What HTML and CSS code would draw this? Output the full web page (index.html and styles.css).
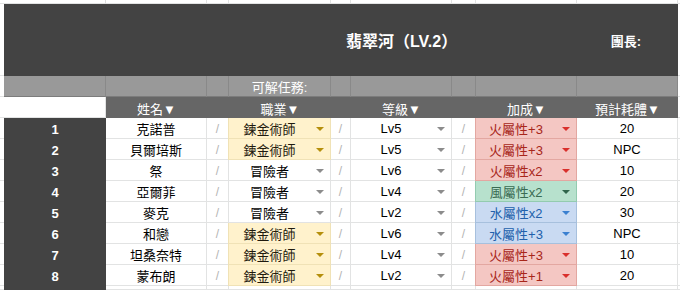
FILE: index.html
```html
<!DOCTYPE html>
<html lang="zh-Hant">
<head>
<meta charset="utf-8">
<title>翡翠河</title>
<link rel="stylesheet" href="styles.css">
</head>
<body>
<div class="sheet">
  <!-- top partial row -->
  <div class="c g"></div><div class="c top-a"></div><div class="c"></div><div class="c"></div><div class="c"></div><div class="c"></div><div class="c"></div><div class="c"></div><div class="c"></div><div class="c"></div><div class="c g"></div>

  <!-- title row -->
  <div class="c g"></div>
  <div class="title"><span class="title-name">翡翠河（LV.2）</span><span class="leader">團長:</span></div>
  <div class="c g"></div>

  <!-- grey row -->
  <div class="c g"></div>
  <div class="c gr"></div><div class="c gr"></div><div class="c gr"></div><div class="c gr">可解任務:</div><div class="c gr"></div><div class="c gr"></div><div class="c gr"></div><div class="c gr"></div><div class="c gr"></div>
  <div class="c g"></div>

  <!-- header row -->
  <div class="c g"></div>
  <div class="c"></div>
  <div class="c hd">姓名▼</div><div class="c hd"></div><div class="c hd">職業▼</div><div class="c hd"></div><div class="c hd">等級▼</div><div class="c hd"></div><div class="c hd">加成▼</div><div class="c hd">預計耗體▼</div>
  <div class="c g"></div>

  <!-- row 1 -->
  <div class="c g"></div>
  <div class="c num">1</div><div class="c">克諾普</div><div class="c sl">/</div>
  <div class="c dd y"><span class="t">鍊金術師</span><i class="a"></i></div><div class="c sl">/</div>
  <div class="c dd"><span class="t">Lv5</span><i class="a"></i></div><div class="c sl">/</div>
  <div class="c dd r"><span class="t">火屬性+3</span><i class="a"></i></div><div class="c">20</div>
  <div class="c g"></div>

  <!-- row 2 -->
  <div class="c g"></div>
  <div class="c num">2</div><div class="c">貝爾培斯</div><div class="c sl">/</div>
  <div class="c dd y"><span class="t">鍊金術師</span><i class="a"></i></div><div class="c sl">/</div>
  <div class="c dd"><span class="t">Lv5</span><i class="a"></i></div><div class="c sl">/</div>
  <div class="c dd r"><span class="t">火屬性+3</span><i class="a"></i></div><div class="c">NPC</div>
  <div class="c g"></div>

  <!-- row 3 -->
  <div class="c g"></div>
  <div class="c num">3</div><div class="c">祭</div><div class="c sl">/</div>
  <div class="c dd"><span class="t">冒險者</span><i class="a"></i></div><div class="c sl">/</div>
  <div class="c dd"><span class="t">Lv6</span><i class="a"></i></div><div class="c sl">/</div>
  <div class="c dd r"><span class="t">火屬性x2</span><i class="a"></i></div><div class="c">10</div>
  <div class="c g"></div>

  <!-- row 4 -->
  <div class="c g"></div>
  <div class="c num">4</div><div class="c">亞爾菲</div><div class="c sl">/</div>
  <div class="c dd"><span class="t">冒險者</span><i class="a"></i></div><div class="c sl">/</div>
  <div class="c dd"><span class="t">Lv4</span><i class="a"></i></div><div class="c sl">/</div>
  <div class="c dd gn"><span class="t">風屬性x2</span><i class="a"></i></div><div class="c">20</div>
  <div class="c g"></div>

  <!-- row 5 -->
  <div class="c g"></div>
  <div class="c num">5</div><div class="c">麥克</div><div class="c sl">/</div>
  <div class="c dd"><span class="t">冒險者</span><i class="a"></i></div><div class="c sl">/</div>
  <div class="c dd"><span class="t">Lv2</span><i class="a"></i></div><div class="c sl">/</div>
  <div class="c dd b"><span class="t">水屬性x2</span><i class="a"></i></div><div class="c">30</div>
  <div class="c g"></div>

  <!-- row 6 -->
  <div class="c g"></div>
  <div class="c num">6</div><div class="c">和戀</div><div class="c sl">/</div>
  <div class="c dd y"><span class="t">鍊金術師</span><i class="a"></i></div><div class="c sl">/</div>
  <div class="c dd"><span class="t">Lv6</span><i class="a"></i></div><div class="c sl">/</div>
  <div class="c dd b"><span class="t">水屬性+3</span><i class="a"></i></div><div class="c">NPC</div>
  <div class="c g"></div>

  <!-- row 7 -->
  <div class="c g"></div>
  <div class="c num">7</div><div class="c">坦桑奈特</div><div class="c sl">/</div>
  <div class="c dd y"><span class="t">鍊金術師</span><i class="a"></i></div><div class="c sl">/</div>
  <div class="c dd"><span class="t">Lv4</span><i class="a"></i></div><div class="c sl">/</div>
  <div class="c dd r"><span class="t">火屬性+3</span><i class="a"></i></div><div class="c">10</div>
  <div class="c g"></div>

  <!-- row 8 -->
  <div class="c g"></div>
  <div class="c num">8</div><div class="c">蒙布朗</div><div class="c sl">/</div>
  <div class="c dd y"><span class="t">鍊金術師</span><i class="a"></i></div><div class="c sl">/</div>
  <div class="c dd"><span class="t">Lv2</span><i class="a"></i></div><div class="c sl">/</div>
  <div class="c dd r"><span class="t">火屬性+1</span><i class="a"></i></div><div class="c">20</div>
  <div class="c g"></div>

  <!-- row 9 partial -->
  <div class="c g"></div>
  <div class="c num"></div><div class="c"></div><div class="c"></div><div class="c"></div><div class="c"></div><div class="c"></div><div class="c"></div><div class="c"></div><div class="c"></div>
  <div class="c g"></div>
</div>
</body>
</html>
```

FILE: styles.css
```css
* { box-sizing: border-box; }

html, body {
  margin: 0;
  padding: 0;
  background: #ffffff;
}

body {
  font-family: "Liberation Sans", Arial, "Noto Sans CJK TC", sans-serif;
  font-size: 13px;
  color: #000000;
}

.sheet {
  display: grid;
  grid-template-columns: 4px 102px 101px 22px 102px 20px 101px 24px 101px 101px 1fr;
  grid-template-rows: 4px 72px 21px 21px repeat(8, 21px) 1fr;
  width: 680px;
  height: 290px;
  overflow: hidden;
}

.c {
  display: flex;
  align-items: center;
  justify-content: center;
  padding-top: 1px;
  border-right: 1px solid #e2e3e3;
  border-bottom: 1px solid #e2e3e3;
  white-space: nowrap;
  min-width: 0;
  overflow: hidden;
}

.g { border-right: none; }

.top-a { border-right-color: #dcdcdc; }

/* title band */
.title {
  grid-column: 2 / 11;
  display: flex;
  align-items: center;
  background: #434343;
  color: #ffffff;
  padding-left: 342px;
  padding-right: 37px;
  white-space: nowrap;
}

.title-name {
  font-size: 16px;
  font-weight: bold;
}

.leader {
  margin-left: auto;
  font-size: 13px;
  font-weight: bold;
}

/* grey band */
.gr {
  background: #999999;
  color: #ffffff;
  border-right-color: #898989;
  border-bottom-color: #7c7c7c;
}

/* header band */
.hd {
  background: #666666;
  color: #ffffff;
  border: none;
}

/* row numbers */
.num {
  background: #434343;
  color: #ffffff;
  font-weight: bold;
  border-right: none;
  border-bottom: none;
}

/* slash separators */
.sl {
  color: #b3b3b3;
  font-size: 12px;
}

/* dropdown cells */
.dd {
  justify-content: flex-start;
  padding-right: 6px;
}

.dd .t {
  flex: 1;
  text-align: center;
}

.dd .a {
  width: 0;
  height: 0;
  margin-left: 6px;
  margin-top: 1px;
  border-left: 4px solid transparent;
  border-right: 4px solid transparent;
  border-top: 4px solid #8c8c8c;
}

.y {
  background: #fff2cc;
  color: #1f1a0e;
  border-color: #f0e2b6;
  box-shadow: -1px 0 0 #f0e2b6;
}
.y .a { border-top-color: #b58f0c; }

.r {
  background: #f4c7c3;
  color: #a8261a;
  border-color: #e3a7a1;
  box-shadow: -1px 0 0 #e3a7a1;
}
.r .a { border-top-color: #d9302c; }

.gn {
  background: #b7e1cd;
  color: #3a6b53;
  border-color: #93cbb0;
  box-shadow: -1px 0 0 #93cbb0;
}
.gn .a { border-top-color: #2f654b; }

.b {
  background: #c9daf2;
  color: #2160ab;
  border-color: #a7c0dd;
  box-shadow: -1px 0 0 #a7c0dd;
}
.b .a { border-top-color: #3b80d0; }
```
